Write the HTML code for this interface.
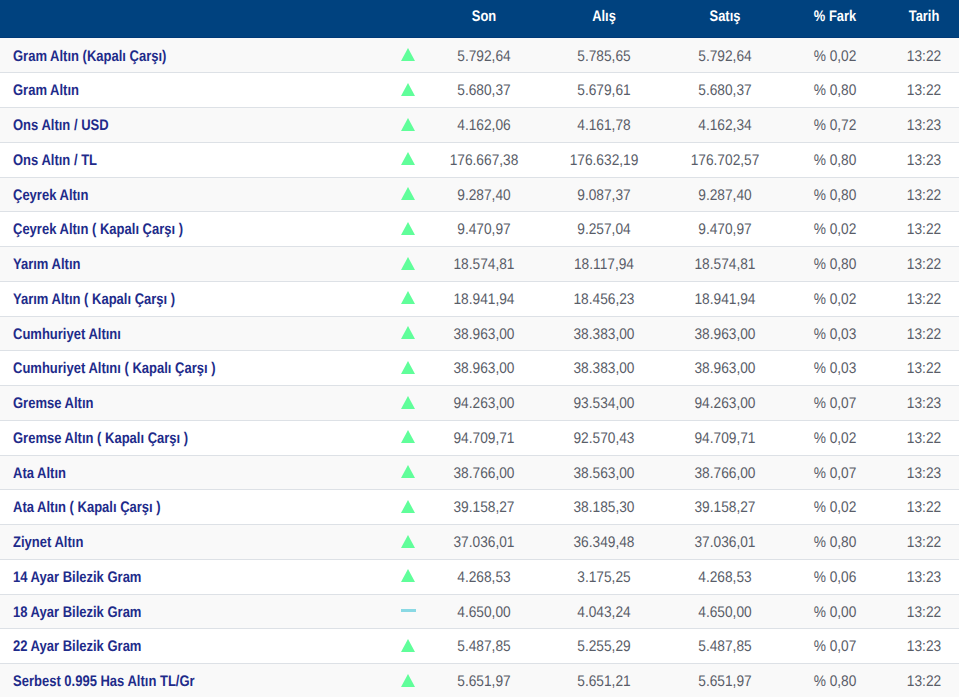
<!DOCTYPE html><html><head><meta charset="utf-8"><style>
*{margin:0;padding:0;box-sizing:border-box}
html,body{width:959px;height:697px;overflow:hidden;background:#fff}
body{position:relative;font-family:"Liberation Sans",sans-serif;text-rendering:geometricPrecision}
.hd{position:absolute;left:0;top:0;width:959px;height:38px;background:#00427f;border-bottom:1px solid #003a78}
.ht{position:absolute;top:7px;height:20px;line-height:20px;width:120px;margin-left:-60px;text-align:center;color:#fff;font-weight:700;font-size:15.4px;transform-origin:50% 15px;transform:scale(0.8376623376623377,1)}
.r{position:absolute;left:0;width:959px;height:34.75px;border-bottom:1px solid #dde1e6}
.r.o{background:#f9f9f9}
.nm{position:absolute;left:13px;top:8px;height:20px;line-height:20px;white-space:nowrap;color:#1e2b8a;font-weight:700;font-size:15.4px;transform-origin:0 15px;transform:scale(0.845,1)}
.v{position:absolute;top:8px;height:20px;line-height:20px;width:140px;margin-left:-70px;text-align:center;white-space:nowrap;color:#595d68;font-size:15.4px;transform-origin:50% 15px;transform:scale(0.8912337662337663,1)}
.up{position:absolute;left:401px;top:9.5px;width:0;height:0;border-left:7.75px solid transparent;border-right:7.75px solid transparent;border-bottom:13px solid #60fe9a}
.eq{position:absolute;left:401px;top:14px;width:15px;height:3px;background:#8ad9e4}
</style></head><body>
<div class="hd"></div><div style="position:absolute;left:0;top:38px;width:959px;height:1px;background:#f9f9f9"></div>
<div class="ht" style="left:484.2px">Son</div>
<div class="ht" style="left:604px">Alış</div>
<div class="ht" style="left:725px">Satış</div>
<div class="ht" style="left:834.5px">% Fark</div>
<div class="ht" style="left:923.5px">Tarih</div>
<div class="r o" style="top:38.5px">
<div class="nm">Gram Altın (Kapalı Çarşı)</div>
<div class="up"></div>
<div class="v" style="left:484.2px">5.792,64</div>
<div class="v" style="left:604px">5.785,65</div>
<div class="v" style="left:725px">5.792,64</div>
<div class="v" style="left:834.5px">% 0,02</div>
<div class="v" style="left:923.5px">13:22</div>
</div>
<div class="r" style="top:73.25px">
<div class="nm">Gram Altın</div>
<div class="up"></div>
<div class="v" style="left:484.2px">5.680,37</div>
<div class="v" style="left:604px">5.679,61</div>
<div class="v" style="left:725px">5.680,37</div>
<div class="v" style="left:834.5px">% 0,80</div>
<div class="v" style="left:923.5px">13:22</div>
</div>
<div class="r o" style="top:108.0px">
<div class="nm">Ons Altın / USD</div>
<div class="up"></div>
<div class="v" style="left:484.2px">4.162,06</div>
<div class="v" style="left:604px">4.161,78</div>
<div class="v" style="left:725px">4.162,34</div>
<div class="v" style="left:834.5px">% 0,72</div>
<div class="v" style="left:923.5px">13:23</div>
</div>
<div class="r" style="top:142.75px">
<div class="nm">Ons Altın / TL</div>
<div class="up"></div>
<div class="v" style="left:484.2px">176.667,38</div>
<div class="v" style="left:604px">176.632,19</div>
<div class="v" style="left:725px">176.702,57</div>
<div class="v" style="left:834.5px">% 0,80</div>
<div class="v" style="left:923.5px">13:23</div>
</div>
<div class="r o" style="top:177.5px">
<div class="nm">Çeyrek Altın</div>
<div class="up"></div>
<div class="v" style="left:484.2px">9.287,40</div>
<div class="v" style="left:604px">9.087,37</div>
<div class="v" style="left:725px">9.287,40</div>
<div class="v" style="left:834.5px">% 0,80</div>
<div class="v" style="left:923.5px">13:22</div>
</div>
<div class="r" style="top:212.25px">
<div class="nm">Çeyrek Altın ( Kapalı Çarşı )</div>
<div class="up"></div>
<div class="v" style="left:484.2px">9.470,97</div>
<div class="v" style="left:604px">9.257,04</div>
<div class="v" style="left:725px">9.470,97</div>
<div class="v" style="left:834.5px">% 0,02</div>
<div class="v" style="left:923.5px">13:22</div>
</div>
<div class="r o" style="top:247.0px">
<div class="nm">Yarım Altın</div>
<div class="up"></div>
<div class="v" style="left:484.2px">18.574,81</div>
<div class="v" style="left:604px">18.117,94</div>
<div class="v" style="left:725px">18.574,81</div>
<div class="v" style="left:834.5px">% 0,80</div>
<div class="v" style="left:923.5px">13:22</div>
</div>
<div class="r" style="top:281.75px">
<div class="nm">Yarım Altın ( Kapalı Çarşı )</div>
<div class="up"></div>
<div class="v" style="left:484.2px">18.941,94</div>
<div class="v" style="left:604px">18.456,23</div>
<div class="v" style="left:725px">18.941,94</div>
<div class="v" style="left:834.5px">% 0,02</div>
<div class="v" style="left:923.5px">13:22</div>
</div>
<div class="r o" style="top:316.5px">
<div class="nm">Cumhuriyet Altını</div>
<div class="up"></div>
<div class="v" style="left:484.2px">38.963,00</div>
<div class="v" style="left:604px">38.383,00</div>
<div class="v" style="left:725px">38.963,00</div>
<div class="v" style="left:834.5px">% 0,03</div>
<div class="v" style="left:923.5px">13:22</div>
</div>
<div class="r" style="top:351.25px">
<div class="nm">Cumhuriyet Altını ( Kapalı Çarşı )</div>
<div class="up"></div>
<div class="v" style="left:484.2px">38.963,00</div>
<div class="v" style="left:604px">38.383,00</div>
<div class="v" style="left:725px">38.963,00</div>
<div class="v" style="left:834.5px">% 0,03</div>
<div class="v" style="left:923.5px">13:22</div>
</div>
<div class="r o" style="top:386.0px">
<div class="nm">Gremse Altın</div>
<div class="up"></div>
<div class="v" style="left:484.2px">94.263,00</div>
<div class="v" style="left:604px">93.534,00</div>
<div class="v" style="left:725px">94.263,00</div>
<div class="v" style="left:834.5px">% 0,07</div>
<div class="v" style="left:923.5px">13:23</div>
</div>
<div class="r" style="top:420.75px">
<div class="nm">Gremse Altın ( Kapalı Çarşı )</div>
<div class="up"></div>
<div class="v" style="left:484.2px">94.709,71</div>
<div class="v" style="left:604px">92.570,43</div>
<div class="v" style="left:725px">94.709,71</div>
<div class="v" style="left:834.5px">% 0,02</div>
<div class="v" style="left:923.5px">13:22</div>
</div>
<div class="r o" style="top:455.5px">
<div class="nm">Ata Altın</div>
<div class="up"></div>
<div class="v" style="left:484.2px">38.766,00</div>
<div class="v" style="left:604px">38.563,00</div>
<div class="v" style="left:725px">38.766,00</div>
<div class="v" style="left:834.5px">% 0,07</div>
<div class="v" style="left:923.5px">13:23</div>
</div>
<div class="r" style="top:490.25px">
<div class="nm">Ata Altın ( Kapalı Çarşı )</div>
<div class="up"></div>
<div class="v" style="left:484.2px">39.158,27</div>
<div class="v" style="left:604px">38.185,30</div>
<div class="v" style="left:725px">39.158,27</div>
<div class="v" style="left:834.5px">% 0,02</div>
<div class="v" style="left:923.5px">13:22</div>
</div>
<div class="r o" style="top:525.0px">
<div class="nm">Ziynet Altın</div>
<div class="up"></div>
<div class="v" style="left:484.2px">37.036,01</div>
<div class="v" style="left:604px">36.349,48</div>
<div class="v" style="left:725px">37.036,01</div>
<div class="v" style="left:834.5px">% 0,80</div>
<div class="v" style="left:923.5px">13:22</div>
</div>
<div class="r" style="top:559.75px">
<div class="nm">14 Ayar Bilezik Gram</div>
<div class="up"></div>
<div class="v" style="left:484.2px">4.268,53</div>
<div class="v" style="left:604px">3.175,25</div>
<div class="v" style="left:725px">4.268,53</div>
<div class="v" style="left:834.5px">% 0,06</div>
<div class="v" style="left:923.5px">13:23</div>
</div>
<div class="r o" style="top:594.5px">
<div class="nm">18 Ayar Bilezik Gram</div>
<div class="eq"></div>
<div class="v" style="left:484.2px">4.650,00</div>
<div class="v" style="left:604px">4.043,24</div>
<div class="v" style="left:725px">4.650,00</div>
<div class="v" style="left:834.5px">% 0,00</div>
<div class="v" style="left:923.5px">13:22</div>
</div>
<div class="r" style="top:629.25px">
<div class="nm">22 Ayar Bilezik Gram</div>
<div class="up"></div>
<div class="v" style="left:484.2px">5.487,85</div>
<div class="v" style="left:604px">5.255,29</div>
<div class="v" style="left:725px">5.487,85</div>
<div class="v" style="left:834.5px">% 0,07</div>
<div class="v" style="left:923.5px">13:23</div>
</div>
<div class="r o" style="top:664.0px">
<div class="nm">Serbest 0.995 Has Altın TL/Gr</div>
<div class="up"></div>
<div class="v" style="left:484.2px">5.651,97</div>
<div class="v" style="left:604px">5.651,21</div>
<div class="v" style="left:725px">5.651,97</div>
<div class="v" style="left:834.5px">% 0,80</div>
<div class="v" style="left:923.5px">13:22</div>
</div>
</body></html>
